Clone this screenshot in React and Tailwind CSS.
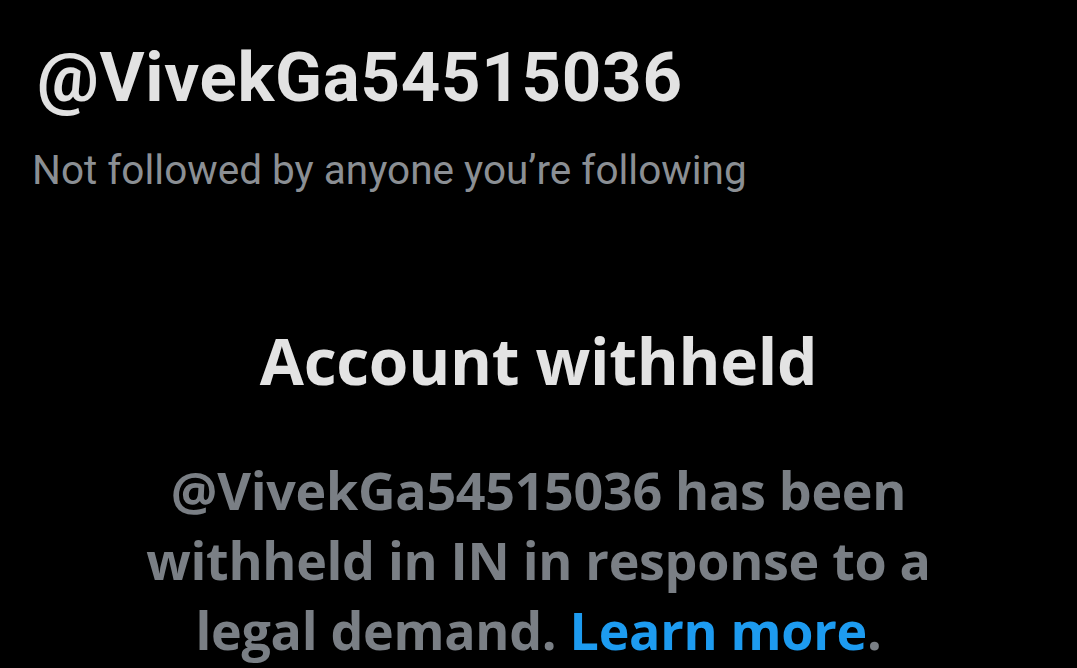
export default function App() {
  return (
    <div className="w-[1077px] h-[668px] overflow-hidden bg-black" style={{ fontFamily: "Roboto, 'Liberation Sans', sans-serif" }}>
      <div className="pl-[37px] pt-[38px]">
        <h1 className="text-[69px] leading-[80px] font-bold text-[#e2e2e2] tracking-[0.7px]">@VivekGa54515036</h1>
        <p className="mt-[28px] -ml-[5px] text-[40.5px] leading-[48px] text-[#8b8f94]">
          Not followed by anyone you’re following
        </p>
      </div>
      <div className="mt-[129px] flex flex-col items-center text-center" style={{ fontFamily: "'Open Sans', Roboto, sans-serif" }}>
        <h2 className="text-[64px] leading-[76px] font-bold text-[#e3e3e3] tracking-[-0.3px]">
          Account withheld
        </h2>
        <p className="mt-[56px] w-[980px] text-[52px] leading-[70px] font-bold text-[#7a7f85] tracking-[-0.3px]">
          @VivekGa54515036 has been
          <br />
          withheld in IN in response to a
          <br />
          legal demand. <span className="text-[#1d9bf0]">Learn more</span>.
        </p>
      </div>
    </div>
  );
}
